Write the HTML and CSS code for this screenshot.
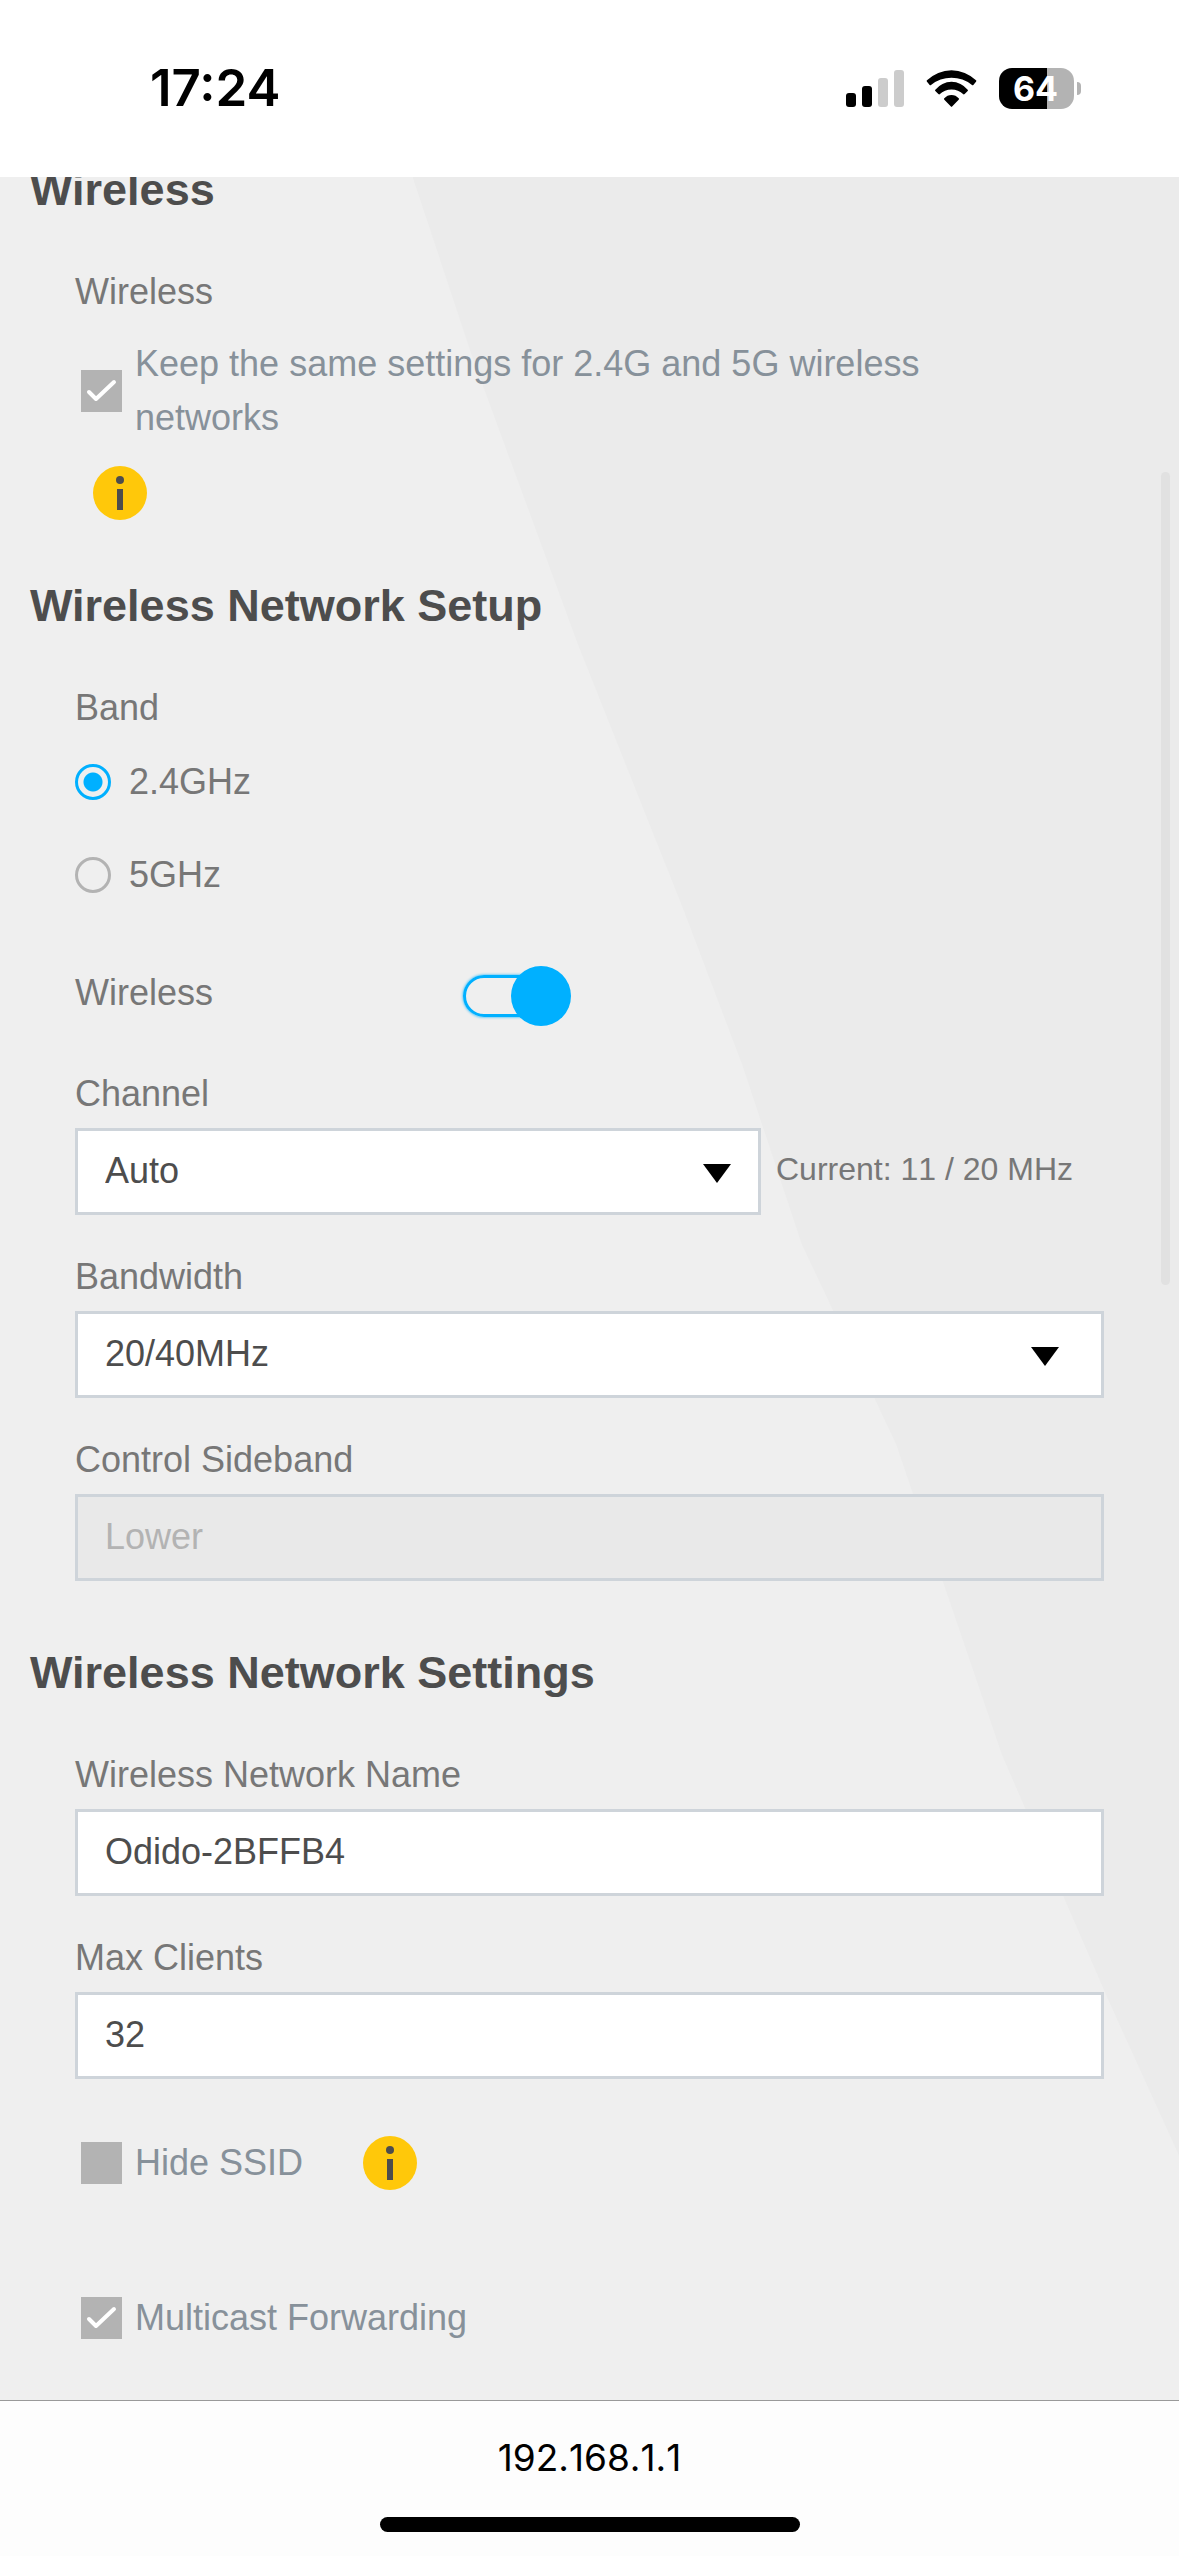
FILE: index.html
```html
<!DOCTYPE html>
<html lang="en">
<head>
    <meta charset="UTF-8">
    <meta name="viewport" content="width=device-width, initial-scale=1.0">
    <title>Wireless</title>
    <link rel="stylesheet" href="styles.css">
</head>
<body>
    <header class="status-bar">
        <span class="time">17:24</span>
        <div class="status-icons">
            <svg class="signal" viewBox="0 0 58 37" aria-hidden="true">
                <rect x="0" y="23" width="10" height="14" rx="3"/>
                <rect x="16" y="16" width="10" height="21" rx="3"/>
                <rect class="off" x="32" y="8" width="10" height="29" rx="3"/>
                <rect class="off" x="48" y="0" width="10" height="37" rx="3"/>
            </svg>
            <svg class="wifi" viewBox="0 0 151 111" aria-hidden="true">
                <path d="M2 31A105 105 0 0 1 149 31Q151 33 149 35L141 45Q139 47 137 45A97 97 0 0 0 14 45Q12 47 10 45L2 35Q0 33 2 31Z"/>
                <path d="M27 59A62 62 0 0 1 124 59Q126 61 124 63L115 72Q113 74 111 73A50 50 0 0 0 40 73Q38 74 36 72L27 63Q25 61 27 59Z"/>
                <path d="M54 85A28 28 0 0 1 97 85Q99 87 97 89L78 109Q76 112 73 109L54 89Q52 87 54 85Z"/>
            </svg>
            <span class="battery">64</span>
        </div>
    </header>

    <main>
        <section>
            <h2>Wireless</h2>
            <div class="fields">
                <p class="label">Wireless</p>
                <label class="check check-long">
                    <input type="checkbox" checked>
                    <span>Keep the same settings for 2.4G and 5G wireless networks</span>
                </label>
                <button class="info info-below" type="button" aria-label="About shared settings">
                    <svg viewBox="0 0 54 54"><circle cx="27" cy="14" r="4"/><rect x="24" y="23" width="6" height="21"/></svg>
                </button>
            </div>
        </section>

        <section>
            <h2>Wireless Network Setup</h2>
            <div class="fields">
                <fieldset class="band">
                    <legend class="label">Band</legend>
                    <label class="radio"><input type="radio" name="band" checked>2.4GHz</label>
                    <label class="radio"><input type="radio" name="band">5GHz</label>
                </fieldset>

                <div class="switch-row">
                    <label for="wireless">Wireless</label>
                    <input class="switch" type="checkbox" id="wireless" checked>
                </div>

                <div class="field">
                    <label for="channel">Channel</label>
                    <div class="with-note">
                        <select class="box" id="channel">
                            <option>Auto</option>
                        </select>
                        <span class="note">Current: 11 / 20 MHz</span>
                    </div>
                </div>

                <div class="field">
                    <label for="bandwidth">Bandwidth</label>
                    <select class="box" id="bandwidth">
                        <option>20/40MHz</option>
                    </select>
                </div>

                <div class="field">
                    <label for="sideband">Control Sideband</label>
                    <input class="box" type="text" id="sideband" value="Lower" disabled>
                </div>
            </div>
        </section>

        <section>
            <h2>Wireless Network Settings</h2>
            <div class="fields">
                <div class="field">
                    <label for="ssid">Wireless Network Name</label>
                    <input class="box" type="text" id="ssid" value="Odido-2BFFB4">
                </div>

                <div class="field">
                    <label for="clients">Max Clients</label>
                    <input class="box" type="text" id="clients" value="32">
                </div>

                <div class="check-row">
                    <label class="check"><input type="checkbox"><span>Hide SSID</span></label>
                    <button class="info" type="button" aria-label="About hiding the SSID">
                        <svg viewBox="0 0 54 54"><circle cx="27" cy="14" r="4"/><rect x="24" y="23" width="6" height="21"/></svg>
                    </button>
                </div>

                <div class="check-row multicast">
                    <label class="check"><input type="checkbox" checked><span>Multicast Forwarding</span></label>
                </div>
            </div>
        </section>

        <div class="scrollbar"></div>
    </main>

    <footer class="address-bar">
        <button class="address" type="button">192.168.1.1</button>
        <div class="home-indicator"></div>
    </footer>
</body>
</html>
```

FILE: styles.css
```css
* { box-sizing: border-box; }

body {
    margin: 0;
    min-height: 100vh;
    display: flex;
    flex-direction: column;
    font: 36px/54px "Liberation Sans", Arial, sans-serif;
    color: #777;
    background: #fff;
}

h2, p, fieldset, legend { margin: 0; padding: 0; border: 0; }
input, select, button { font: inherit; margin: 0; }

/* status bar */
.status-bar {
    height: 177px;
    padding: 0 98px 0 150px;
    display: flex;
    align-items: center;
    justify-content: space-between;
    color: #000;
    font-family: Inter, sans-serif;
}
.time { padding-bottom: 2px; font-size: 51px; font-weight: 600; }
.status-icons { display: flex; align-items: center; gap: 22px; }
.signal { width: 58px; height: 37px; }
.signal .off { fill: #ccc; }
.wifi { width: 51px; height: 37px; }
.battery {
    position: relative;
    width: 75px;
    height: 41px;
    margin-right: 7px;
    padding-right: 2px;
    border-radius: 13px;
    background: linear-gradient(90deg, #000 64%, #b3b3b3 64%);
    color: #fff;
    font-size: 34px;
    font-weight: 700;
    line-height: 41px;
    text-align: center;
}
.battery::after {
    content: "";
    position: absolute;
    right: -7px;
    top: 14px;
    width: 4px;
    height: 13px;
    border-radius: 0 4px 4px 0;
    background: #b3b3b3;
}

/* page */
main {
    position: relative;
    z-index: 0;
    flex: 1;
    overflow: hidden;
    background: #efefef;
}
main::before {
    content: "";
    position: absolute;
    inset: 0;
    z-index: -1;
    background: #ebebeb;
    clip-path: polygon(35% 0, 40% 8%, 49% 21%, 58% 33%, 63% 40%, 68% 48%, 76% 57%, 85% 71%, 94% 82%, 100% 89%, 100% 0);
}
.scrollbar {
    position: absolute;
    right: 9px;
    top: 295px;
    width: 9px;
    height: 813px;
    border-radius: 5px;
    background: #e1e1e1;
}

section { margin-bottom: 65px; }
/* the page is scrolled a little past the first heading */
section:first-child { margin-top: -14px; margin-bottom: 59px; }
section:nth-child(3) { margin-bottom: 48px; }
h2 {
    padding: 0 30px;
    margin-bottom: 48px;
    font-size: 45px;
    line-height: 54px;
    color: #4d4d4d;
}
.fields { padding: 0 75px; }

/* text boxes and drop-downs */
.field { margin-bottom: 35px; }
.field label { display: block; margin-bottom: 7px; }
.box {
    display: block;
    width: 100%;
    height: 87px;
    padding: 0 27px 2px;
    border: 3px solid #ced4da;
    border-radius: 0;
    background-color: #fff;
    color: #4d4d4d;
    appearance: none;
}
.box:disabled { background-color: #e9e9e9; color: #b3b3b3; }
select.box {
    background-image: url("data:image/svg+xml,%3Csvg xmlns='http://www.w3.org/2000/svg' width='28' height='19'%3E%3Cpath d='M0 0H28L14 19Z'/%3E%3C/svg%3E");
    background-repeat: no-repeat;
    background-position: 95.8% 53%;
}
.with-note { display: flex; align-items: center; gap: 15px; }
.with-note .box { width: 66.6667%; }
.note { padding-bottom: 6px; font-size: 32px; font-kerning: none; white-space: nowrap; }

/* check boxes */
.check {
    display: flex;
    align-items: center;
    gap: 13px;
    padding-left: 6px;
    color: #87919a;
}
.check input {
    flex: none;
    width: 41px;
    height: 42px;
    appearance: none;
    background: #b3b3b3;
}
.check input:checked {
    background-image: url("data:image/svg+xml,%3Csvg xmlns='http://www.w3.org/2000/svg' width='41' height='42'%3E%3Cpath d='M8 22L15 29L33 12' fill='none' stroke='%23fff' stroke-width='4' stroke-linecap='round' stroke-linejoin='round'/%3E%3C/svg%3E");
}
.check-long { max-width: 900px; margin-top: 18px; }
.check-row { display: flex; align-items: center; gap: 60px; margin-top: 57px; }
.multicast { margin-top: 101px; }

.info {
    display: block;
    flex: none;
    width: 54px;
    height: 54px;
    padding: 0;
    border: 0;
    border-radius: 50%;
    background: #ffc80a;
}
.info svg { display: block; fill: #4d4d4d; }
.info-below { margin: 21px 0 0 18px; }

/* band */
.radio { display: flex; align-items: center; gap: 18px; }
.radio input {
    width: 36px;
    height: 36px;
    appearance: none;
    border: 3px solid #b3b3b3;
    border-radius: 50%;
}
.radio input:checked {
    border-color: #00b0ff;
    background: radial-gradient(circle, #00b0ff 9px, transparent 10px);
}
.band .label { margin-bottom: 20px; }
.radio + .radio { margin-top: 39px; }

/* on/off switch */
.switch-row { display: flex; margin: 64px 0 41px; }
.switch-row label { width: 388px; }
.switch { position: relative; width: 108px; height: 60px; appearance: none; }
.switch::before {
    content: "";
    position: absolute;
    inset: 9px 6px 9px 0;
    border: 3px solid #00b0ff;
    border-radius: 21px;
    box-shadow: 0 0 3px #00b0ff;
}
.switch::after {
    content: "";
    position: absolute;
    right: 0;
    top: 0;
    width: 60px;
    height: 60px;
    border-radius: 50%;
    background: #00b0ff;
}

/* address bar */
.address-bar {
    display: flex;
    flex-direction: column;
    align-items: center;
    gap: 37px;
    padding: 35px 0 24px;
    border-top: 1px solid #999;
    background: #fdfdfd;
}
.address {
    padding: 0;
    border: 0;
    background: none;
    color: #000;
    font-family: Inter, sans-serif;
    font-size: 37px;
    font-kerning: none;
    line-height: 44px;
}
.home-indicator {
    width: 420px;
    height: 15px;
    border-radius: 8px;
    background: #000;
}
```
